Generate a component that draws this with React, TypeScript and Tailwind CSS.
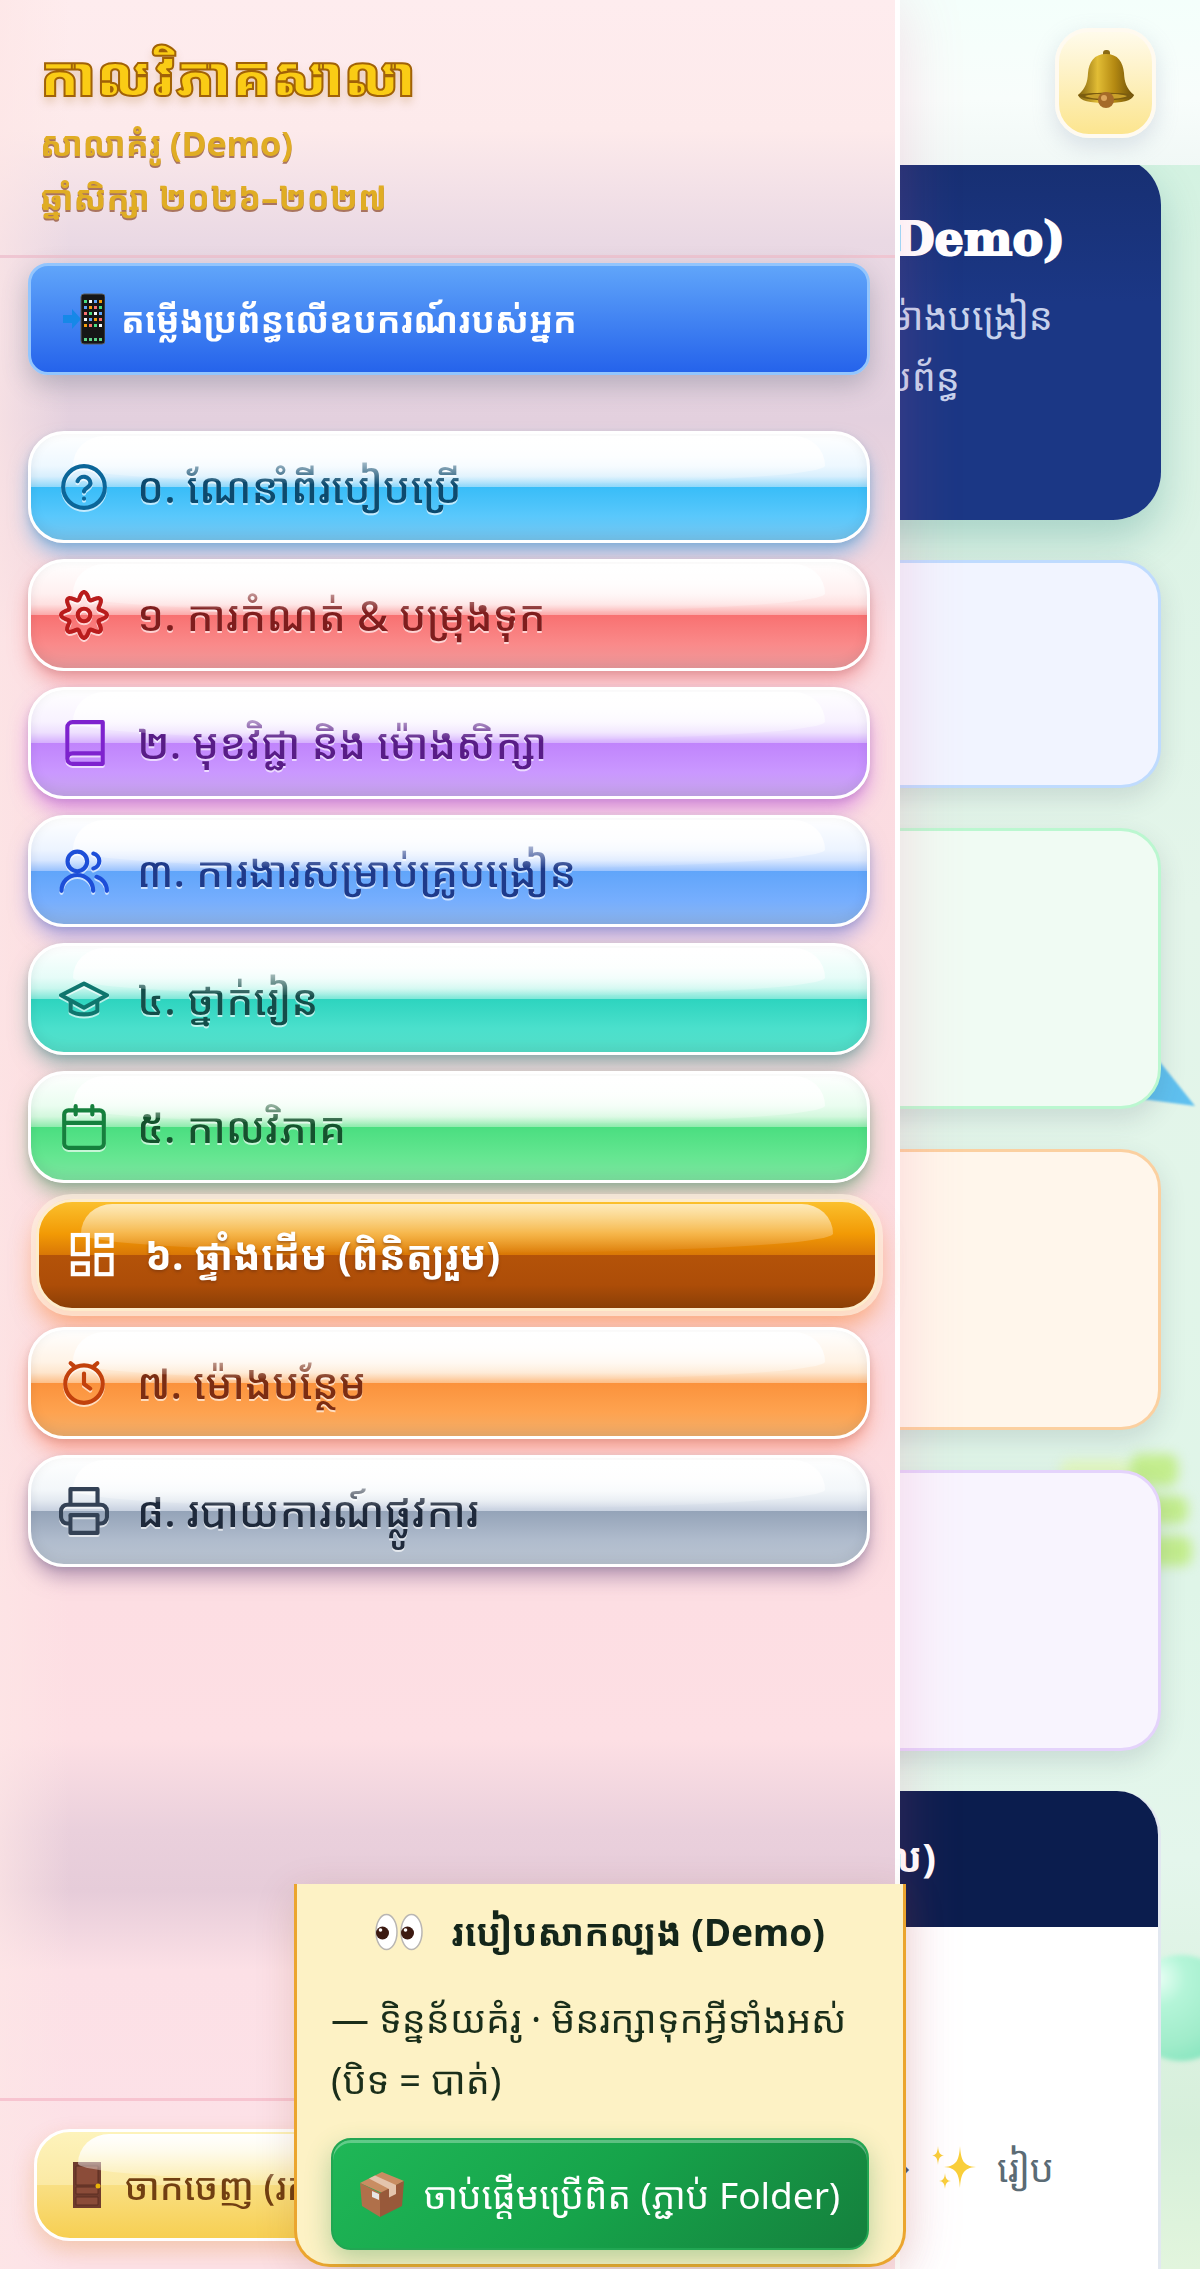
import type { ReactNode } from "react";

type NavItem = {
  label: string;
  icon: ReactNode;
  tone: string;
  active?: boolean;
};

// eight-lobed cog outline around (12, 12)
const cogPath =
  Array.from({ length: 96 }, (_, i) => {
    const angle = (i / 96) * Math.PI * 2;
    const r = 9.3 + 1.7 * Math.cos(angle * 8);
    const x = 12 + r * Math.cos(angle);
    const y = 12 + r * Math.sin(angle);
    return `${i === 0 ? "M" : "L"}${x.toFixed(2)} ${y.toFixed(2)}`;
  }).join("") + "Z";

function Icon({ children }: { children: ReactNode }) {
  return (
    <svg
      viewBox="0 0 24 24"
      fill="none"
      stroke="currentColor"
      strokeWidth="2"
      strokeLinecap="round"
      strokeLinejoin="round"
      className="size-[50px] shrink-0"
      aria-hidden="true"
    >
      {children}
    </svg>
  );
}

const items: NavItem[] = [
  {
    label: "០. ណែនាំពីរបៀបប្រើ",
    tone: "text-[#0c4a6e] [--icon:#0b6699] [--glow:#38a0e88c] bg-[linear-gradient(180deg,#ffffff_0%,#eef8ff_30%,#d8effd_40%,#8fd8fa_50%,#38bdf8_50%,#5ac8fc_78%,#76c5ee_100%)]",
    icon: (
      <>
        <circle cx="12" cy="12" r="10" />
        <path d="M8.9 9.200a3.200 3.200 0 0 1 6.200 1c0 2-3.100 2.400-3.100 4M12 17.600h.01" />
      </>
    ),
  },
  {
    label: "១. ការកំណត់ & បម្រុងទុក",
    tone: "text-[#7f1d1d] [--icon:#b91c1c] [--glow:#ee717199] bg-[linear-gradient(180deg,#ffffff_0%,#fff0f0_30%,#fee0e0_40%,#fba9a9_50%,#f87171_50%,#fa8a8a_78%,#ec999b_100%)]",
    icon: (
      <>
        <circle cx="12" cy="12" r="3" />
        <path d={cogPath} />
      </>
    ),
  },
  {
    label: "២. មុខវិជ្ជា និង ម៉ោងសិក្សា",
    tone: "text-[#581c87] [--icon:#7e22ce] [--glow:#c45ae099] bg-[linear-gradient(180deg,#ffffff_0%,#f8f2ff_30%,#eee0fe_40%,#d5affe_50%,#c084fc_50%,#ca98ff_78%,#c6a5ea_100%)]",
    icon: <path d="M4 19.500v-15A2.500 2.500 0 0 1 6.500 2H21v20H6.500a2.500 2.500 0 0 1 0-5H21" />,
  },
  {
    label: "៣. ការងារសម្រាប់គ្រូបង្រៀន",
    tone: "text-[#1e3a8a] [--icon:#1d4ed8] [--glow:#6d78e08c] bg-[linear-gradient(180deg,#ffffff_0%,#edf4ff_30%,#d8e7ff_40%,#99c2fd_50%,#60a5fa_50%,#76aefe_78%,#8cb4ec_100%)]",
    icon: (
      <>
        <circle cx="8.800" cy="7.400" r="4.700" />
        <path d="M1.200 21.500a7.600 7.600 0 0 1 15.200 0M16.500 3.600a3.700 3.700 0 0 1 0 7.200M18 14.800a7 7 0 0 1 5 6.700" />
      </>
    ),
  },
  {
    label: "៤. ថ្នាក់រៀន",
    tone: "text-[#134e4a] [--icon:#0f766e] [--glow:#3c8f8880] bg-[linear-gradient(180deg,#ffffff_0%,#e6fcf8_30%,#c9f7ee_40%,#7de7d8_50%,#2dd4bf_50%,#4be0cc_78%,#54dec8_100%)]",
    icon: (
      <>
        <path d="m12 4.600 11 5.600-11 6-11-6z" />
        <path d="M5.600 13v4.800c3 2.100 9.800 2.100 12.800 0V13" />
      </>
    ),
  },
  {
    label: "៥. កាលវិភាគ",
    tone: "text-[#14532d] [--icon:#15803d] [--glow:#4a995e80] bg-[linear-gradient(180deg,#ffffff_0%,#eafdf0_30%,#d4f8de_40%,#8eebad_50%,#4ade80_50%,#65e691_78%,#7de3a0_100%)]",
    icon: (
      <>
        <rect x="2.500" y="4" width="19" height="18" rx="2" />
        <path d="M8 2v4M16 2v4M3 10h18" />
      </>
    ),
  },
  {
    label: "៦. ផ្ទាំងដើម (ពិនិត្យរួម)",
    active: true,
    tone: "",
    icon: (
      <g strokeLinejoin="miter">
        <rect x="2.800" y="2.400" width="7.200" height="9.200" />
        <rect x="14.200" y="2.400" width="7.200" height="5.200" />
        <rect x="14.200" y="12" width="7.200" height="9.200" />
        <rect x="2.800" y="16" width="7.200" height="5.200" />
      </g>
    ),
  },
  {
    label: "៧. ម៉ោងបន្ថែម",
    tone: "text-[#7c2d12] [--icon:#c2410c] [--glow:#f973508c] bg-[linear-gradient(180deg,#ffffff_0%,#fff3e6_30%,#fee6cd_40%,#fdbf88_50%,#fb923c_50%,#fea350_78%,#f0ad6b_100%)]",
    icon: (
      <>
        <circle cx="12" cy="12.500" r="9" />
        <path d="M12 7.500v5l3 2.200M5.600 2.500l1.600 1.400M18.400 2.500 16.800 3.900" />
      </>
    ),
  },
  {
    label: "៨. របាយការណ៍ផ្លូវការ",
    tone: "text-[#1e293b] [--icon:#334155] [--glow:#80608f8c] bg-[linear-gradient(180deg,#ffffff_0%,#f3f7fa_30%,#e4eaf1_40%,#c8d1e0_50%,#94a3b8_50%,#b0bccd_78%,#bac4d1_100%)]",
    icon: (
      <>
        <path d="M5.500 9V1.500h13V9M5 18H4a3 3 0 0 1-3-3v-3a3 3 0 0 1 3-3h16a3 3 0 0 1 3 3v3a3 3 0 0 1-3 3h-1" />
        <rect x="5.500" y="14" width="13" height="8.500" />
      </>
    ),
  },
];

function Gloss({ tint }: { tint: string }) {
  return (
    <span
      className={`pointer-events-none absolute inset-x-[5%] top-0.5 h-[49px] rounded-[32px_32px_50%_50%/30px_30px_20px_20px] ${tint}`}
    />
  );
}

function NavButton({ item }: { item: NavItem }) {
  const base =
    "relative flex h-28 w-full items-center gap-7 overflow-hidden rounded-[36px] border-[3px] px-7 text-left leading-none";

  if (item.active) {
    return (
      <li className="translate-x-2">
        <button
          type="button"
          aria-current="page"
          className={`${base} border-[#fdeccb] bg-[linear-gradient(180deg,#fbc02d_0%,#f29a05_30%,#d97706_50%,#b45309_50%,#ad4d08_78%,#8a3f06_100%)] text-[40px] font-bold text-white shadow-[0_0_0_5px_#fdf0dfb3,0_14px_24px_#f9731680] [text-shadow:0_2px_3px_#78350f99]`}
        >
          <span className="relative z-10">
            <Icon>{item.icon}</Icon>
          </span>
          <span className="relative z-10 whitespace-nowrap">{item.label}</span>
          <Gloss tint="bg-[linear-gradient(180deg,#ffffffad,#ffffff05)]" />
        </button>
      </li>
    );
  }

  return (
    <li>
      <button
        type="button"
        className={`${base} border-white text-[42px] font-medium shadow-[0_12px_20px_-2px_var(--glow),0_3px_6px_#47556933,inset_0_-3px_12px_#0f172a14] [text-shadow:0_2px_0_#ffffffa6] ${item.tone}`}
      >
        <span className="relative z-10 text-(--icon) drop-shadow-[0_2px_0_#ffffffa6]">
          <Icon>{item.icon}</Icon>
        </span>
        <span className="whitespace-nowrap">{item.label}</span>
        <Gloss tint="bg-[linear-gradient(180deg,#ffffff_0%,#ffffffcc_40%,#ffffff00_100%)]" />
      </button>
    </li>
  );
}

function PhoneIcon() {
  return (
    <svg viewBox="0 0 42 52" className="h-[52px] w-[42px] shrink-0" aria-hidden="true">
      <path d="M0 22h9v-6l9 10-9 10v-6H0z" fill="#1688e8" />
      <rect x="18" y="1" width="24" height="50" rx="3" fill="#161616" stroke="#5b5b5b" />
      {[7, 13, 19, 25, 31].map((y, row) =>
        [22, 27, 32, 37].map((x, col) => (
          <rect
            key={`${x}-${y}`}
            x={x - 1}
            y={y}
            width="3"
            height="3"
            fill={["#4ade80", "#f8fafc", "#60a5fa", "#f59e0b", "#f87171"][(row * 2 + col) % 5]}
          />
        ))
      )}
      <path d="M21 45h3v3h-3zM26 45h3v3h-3zM31 45h3v3h-3zM36 45h3v3h-3z" fill="#5fd38a" />
    </svg>
  );
}

function BellIcon() {
  return (
    <svg viewBox="0 0 60 60" className="size-[60px]" aria-hidden="true">
      <defs>
        <linearGradient id="brass" x1="0" x2="1">
          <stop offset="0" stopColor="#80600d" />
          <stop offset=".35" stopColor="#e2bd35" />
          <stop offset=".65" stopColor="#b58a12" />
          <stop offset="1" stopColor="#6b4e08" />
        </linearGradient>
      </defs>
      <rect x="27" y="1" width="7" height="8" rx="3" fill="#8a6a14" />
      <path d="M30 5c-12 0-17 8-18 19-.5 9-2 15-10 22 2 6 12 8 28 8s26-2 28-8c-8-7-9.500-13-10-22C47 13 42 5 30 5Z" fill="url(#brass)" />
      <path d="M2 46c9-3 47-3 56 0-5 7-51 7-56 0Z" fill="#7b5c10" />
      <path d="M9 47c8-3 34-3 42 0-6 4-36 4-42 0Z" fill="#c9a02a" />
      <circle cx="30" cy="51" r="8" fill="#a56a28" />
      <circle cx="28" cy="49" r="3" fill="#dca65d" />
    </svg>
  );
}

function DoorIcon() {
  return (
    <svg viewBox="0 0 28 46" className="h-[46px] w-7 shrink-0" aria-hidden="true">
      <path d="M0 0h28v46H0z" fill="#6f3b2d" />
      <path d="M3 4h22v19H3zM3 25h22v7H3zM3 35h22v8H3z" fill="#8b4c39" stroke="#5c2e22" />
      <circle cx="25" cy="24" r="2.500" fill="#eab308" />
    </svg>
  );
}

function EyesIcon() {
  return (
    <svg viewBox="0 0 48 38" className="h-[38px] w-12 shrink-0" aria-hidden="true">
      <ellipse cx="11.500" cy="19" rx="10.500" ry="17.500" fill="#fff" stroke="#b9b6b3" strokeWidth="1.500" />
      <ellipse cx="36.500" cy="19" rx="10.500" ry="17.500" fill="#fff" stroke="#b9b6b3" strokeWidth="1.500" />
      <circle cx="7.500" cy="20" r="6.500" fill="#3c1a12" />
      <circle cx="32.500" cy="20" r="6.500" fill="#3c1a12" />
      <circle cx="5.500" cy="17" r="1.800" fill="#fff" />
      <circle cx="30.500" cy="17" r="1.800" fill="#fff" />
    </svg>
  );
}

function PackageIcon() {
  return (
    <svg viewBox="0 0 44 46" className="h-[46px] w-11 shrink-0" aria-hidden="true">
      <path d="M0 12 22 1l22 9-22 12z" fill="#c98d62" />
      <path d="M0 12l20 10v24L2 35z" fill="#b0704a" />
      <path d="M20 22 44 10l-2 25-22 11z" fill="#98593a" />
      <path d="M9 7.500 15 4.500 36 14v9l-7 3.500V18z" fill="#e4c4ac" />
      <path d="m12 20 7 3v6l-7-3z" fill="#e7e5e4" />
    </svg>
  );
}

function SparklesIcon() {
  return (
    <svg viewBox="0 0 46 44" className="h-11 w-[46px] shrink-0" aria-hidden="true" fill="#f9cf3a">
      <path d="M29 1c1 14 3 20 16 21-13 1-15 7-16 21-1-14-3-20-16-21 13-1 15-7 16-21Z" />
      <path d="M7 1c.5 7 2 9 6 9.500C9 11 7.500 13 7 20c-.5-7-2-9-6-9.500C5 10 6.500 8 7 1ZM14 28c.5 6 2 7.500 6 8-4 .5-5.500 2-6 8-.5-6-2-7.500-6-8 4-.5 5.500-2 6-8Z" />
    </svg>
  );
}

function Page() {
  return (
    <main className="relative h-screen overflow-hidden bg-[linear-gradient(180deg,#cdf3e0_0%,#d8f2e3_12%,#e4f5ea_40%,#dff5e8_70%,#e4f6ec_82%,#d6efda_94%,#e2f5dd_100%)]">
      <svg className="absolute top-[1060px] right-0 h-[560px] w-[80px] overflow-visible" viewBox="0 0 80 560" aria-hidden="true">
        <g className="blur-[1px]">
          <path d="M40 2 75 46 22 39z" fill="#5fc0ef" />
        </g>
        <g className="blur-[6px]" fill="#c3ed8d">
          <rect x="-60" y="400" width="70" height="26" rx="10" fill="#e2f7c0" />
          <rect x="10" y="394" width="48" height="32" rx="10" />
          <rect x="-10" y="436" width="78" height="28" rx="10" />
          <rect x="-10" y="476" width="82" height="30" rx="10" />
        </g>
      </svg>
      <span className="absolute top-[1955px] -right-[34px] size-[106px] rounded-full bg-[radial-gradient(circle_at_28%_22%,#e9fff5_0%,#b4f5d8_25%,#a0ecca_60%,#72dfb6_100%)] blur-[2px]" />

      <header className="relative z-10 flex h-[165px] items-start justify-end bg-[linear-gradient(180deg,#f4fffb,#f8fdfb_60%,#f1f8f6)] px-11 pt-7">
        <button
          type="button"
          aria-label="Notifications"
          className="flex h-[110px] w-[101px] items-center justify-center rounded-[34px] border-4 border-[#fffaf0] bg-[linear-gradient(180deg,#fffbeb,#fce58f)] pb-2 shadow-[0_8px_22px_#94a3b84d]"
        >
          <BellIcon />
        </button>
      </header>

      <div className="relative -mt-2 flex flex-col gap-10 px-[39px]">
        <section className="h-[363px] rounded-[48px] bg-[linear-gradient(180deg,#172f72,#1b3785_40%,#1b3785)] pt-12 pr-24 text-right text-white shadow-[0_20px_40px_#0f766e40]">
          <h1 className="font-['DejaVu_Serif','Noto_Serif_Khmer',serif] text-[46px] leading-[68px] font-black [-webkit-text-stroke:2px_#ffffff]">
            សាលាគំរូ (Demo)
          </h1>
          <p className="pt-3 pr-3 text-[38px] leading-[61px] text-[#c7d2ec]">ម៉ោងបង្រៀន</p>
          <p className="pr-[105px] text-[38px] leading-[61px] text-[#c7d2ec]">ប្រព័ន្ធ</p>
        </section>
        <section className="h-[228px] rounded-[40px] border-[3px] border-[#bfdbfe] bg-[#f1f4ff] shadow-[0_10px_26px_#33415526]" />
        <section className="h-[281px] rounded-[40px] border-[3px] border-[#bbf7d0] bg-[#f0fbf3] shadow-[0_10px_26px_#33415526]" />
        <section className="h-[281px] rounded-[40px] border-[3px] border-[#fbd0a0] bg-[#fff6eb] shadow-[0_10px_26px_#33415526]" />
        <section className="h-[281px] rounded-[40px] border-[3px] border-[#e4d3fb] bg-[#f8f4fe] shadow-[0_10px_26px_#33415526]" />
        <section className="h-[700px] overflow-hidden rounded-[44px] border-r-[3px] border-[#e2e8f0] bg-white">
          <h2 className="h-[136px] bg-[#0b1d4e] pr-[222px] text-right text-[40px] leading-[132px] font-bold text-white">(សកល)</h2>
          <p className="flex items-center justify-end gap-5 pt-[208px] pr-[104px] text-[38px] leading-[64px] text-[#5b6b75]">
            <span className="text-[#475569]">➔</span>
            <SparklesIcon />
            <span>រៀប</span>
          </p>
        </section>
      </div>
    </main>
  );
}

function Drawer() {
  return (
    <aside className="fixed inset-y-0 left-0 z-20 flex w-3/4 flex-col border-r-[5px] border-white bg-[linear-gradient(90deg,#fde6e6b3_0,#fde6e600_70px),linear-gradient(180deg,#feecee_0,#fdeaeb_130px,#ead9e4_240px,#e3d0de_420px,#f1d6df_550px,#fbdde3_640px,#fcdadd_1400px,#fddee3_1600px,#fddfe4_1740px,#ead0dc_1830px,#e6ccd9_1890px,#fce0e6_1970px,#fde2e8_100%)] shadow-[0_0_60px_#ec5f9633]">
      <header className="h-[258px] border-b-[3px] border-[#efc6d2] pt-9 pl-10">
        <h2 className="mb-1 text-[56px] leading-[76px] font-black text-[#facc15] [-webkit-text-stroke:2px_#a16207] [text-shadow:0_6px_10px_#a1620740]">
          កាលវិភាគសាលា
        </h2>
        <p className="text-[34px] leading-[54px] font-bold text-[#e0ad24] [text-shadow:0_2px_0_#a9745f]">
          សាលាគំរូ (Demo)
        </p>
        <p className="text-[34px] leading-[54px] font-bold text-[#e0ad24] [text-shadow:0_2px_0_#a9745f]">
          ឆ្នាំសិក្សា ២០២៦–២០២៧
        </p>
      </header>

      <div className="flex flex-1 flex-col pt-[5px] pr-[25px] pl-7">
        <button
          type="button"
          className="flex h-28 w-full items-center gap-4 rounded-[20px] border-[3px] border-[#93c5fd] bg-[linear-gradient(180deg,#60a5fa,#2563eb)] pl-8 text-left text-[35px] leading-none font-bold whitespace-nowrap text-white shadow-[0_10px_26px_#4755694d]"
        >
          <PhoneIcon />
          តម្លើងប្រព័ន្ធលើឧបករណ៍របស់អ្នក
        </button>
        <nav className="pt-14">
          <ul className="flex flex-col gap-4">
            {items.map((item) => (
              <NavButton key={item.label} item={item} />
            ))}
          </ul>
        </nav>
      </div>

      <footer className="h-[171px] border-t-[3px] border-[#f7c4d0] px-[34px] pt-7">
        <button
          type="button"
          className="relative flex h-28 w-full items-center gap-6 overflow-hidden rounded-[36px] border-[3px] border-white bg-[linear-gradient(180deg,#fdf3bb_0%,#fbe9a4_50%,#f9df83_50%,#f7cf52_100%)] pl-9 text-left text-[37px] leading-none font-medium whitespace-nowrap text-[#713f12] shadow-[0_10px_22px_#d9770640]"
        >
          <DoorIcon />
          ចាកចេញ (រក្សាទុក)
          <Gloss tint="bg-[linear-gradient(180deg,#ffffff_0%,#ffffffbf_35%,#ffffff0d_100%)]" />
        </button>
      </footer>
    </aside>
  );
}

function DemoNotice() {
  return (
    <section className="fixed bottom-0.5 left-1/2 z-30 w-[51%] -translate-x-1/2 rounded-b-[36px] border-x-[3px] border-b-[3px] border-[#eba52e] bg-[#fdf2c5] px-[34px] pb-[14px] text-[#1a2e1a] shadow-[0_10px_40px_#78350f26]">
      <h2 className="flex items-center justify-center gap-7 pt-4 text-[37px] leading-[64px] font-bold text-[#14261a]">
        <EyesIcon />
        <span className="whitespace-nowrap">របៀបសាកល្បង (Demo)</span>
      </h2>
      <p className="pt-6 text-[38px] leading-[61px]">
        <span className="whitespace-nowrap">— ទិន្នន័យគំរូ · មិនរក្សាទុកអ្វីទាំងអស់</span>
        <br />
        (បិទ = បាត់)
      </p>
      <button
        type="button"
        className="mt-7 flex h-28 w-full items-center justify-center gap-5 rounded-[20px] border-2 border-[#22a653] bg-[linear-gradient(135deg,#1fb757,#16a34a_50%,#15803d)] text-[37px] leading-none whitespace-nowrap text-white shadow-[0_10px_26px_#15803d4d,inset_0_3px_0_#ffffff4d]"
      >
        <PackageIcon />
        ចាប់ផ្តើមប្រើពិត (ភ្ជាប់ Folder)
      </button>
    </section>
  );
}

export default function App() {
  return (
    <div className="font-['Noto_Sans_Khmer','Noto_Sans',sans-serif]">
      <Page />
      <Drawer />
      <DemoNotice />
    </div>
  );
}
